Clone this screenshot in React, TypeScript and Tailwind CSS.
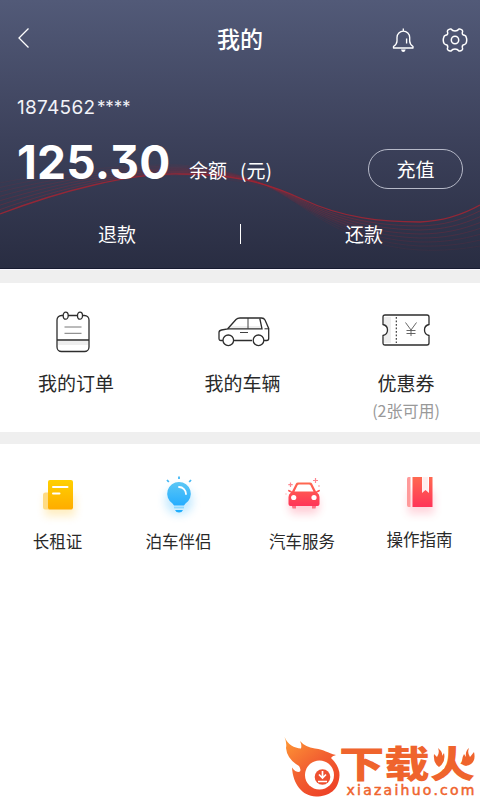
import React from "react";

const sans = "font-['Noto_Sans_CJK_SC',sans-serif]";

// Each strand runs from the left edge over the crest, through the crossing and down to the right edge.
const strands = [0, 1, 2, 3, 4, 5, 6, 7].map((i) => {
  const k = i / 7;
  const d = `M0 ${214 - 31 * k} C60 ${191 - 20 * k} 130 ${173 - 9 * k} 180 ${174 - 9 * k} C225 ${174 - 6 * k} 262 ${180 - 2 * k} 302 ${199 + 8 * k} C342 ${218 + 17 * k} 382 ${222 + 26 * k} 420 ${222 + 28 * k} C444 ${221 + 30 * k} 462 ${215 + 34 * k} 480 ${205 + 41 * k}`;
  return { d, opacity: i === 0 ? 0.85 : 0.42 - 0.3 * k };
});

function Waves() {
  return (
    <svg className="absolute inset-0" width="480" height="269" fill="none" stroke="#a52432">
      <path
        d="M90 184 Q180 156 245 177 Q280 186 312 205 Q350 220 382 222 L345 226 Q310 213 275 191 Q190 165 90 184Z"
        fill="#7e2b3c"
        fillOpacity="0.12"
        stroke="none"
      />
      {strands.map((s, i) => (
        <path key={i} d={s.d} strokeOpacity={s.opacity} strokeWidth={i === 0 ? 1.3 : 0.9} />
      ))}
    </svg>
  );
}

function OrderIcon() {
  return (
    <svg width="34" height="42" viewBox="0 0 34 42" fill="none" stroke="#2d2d2d" strokeWidth="1.3">
      <rect x="2" y="30" width="30" height="4" fill="#eee" stroke="none" />
      <path d="M7 4.5H5.500A4.500 4.500 0 0 0 1 9V36A4.500 4.500 0 0 0 5.500 40.500H28.500A4.500 4.500 0 0 0 33 36V9A4.500 4.500 0 0 0 28.500 4.500H27M12 4.500H21M1 29H33" />
      <ellipse cx="9.700" cy="4.700" rx="2.500" ry="3.500" />
      <ellipse cx="24" cy="4.700" rx="2.500" ry="3.500" />
      <path d="M8.500 16H25.500M8.500 22.300H25.500" stroke="#777" strokeWidth="1" />
    </svg>
  );
}

function CarIcon() {
  return (
    <svg width="52" height="30" viewBox="0 0 52 30" fill="none" stroke="#2d2d2d" strokeWidth="1.3">
      <path d="M14 9H42L43 11.500H11Z" fill="#eee" stroke="none" />
      <path d="M5 23.500H3Q1 23.500 1 21.500V15.500Q1 13.500 3.500 13L9.700 11.800L18 2.500Q19.500 1 22 1H43.500Q46 1 47 3L50.700 11.500V21.500Q50.700 23.500 48.700 23.500H46M16 23.500H34" />
      <path d="M9.700 11.800H44L41.800 1.500" />
      <path d="M30 1V11.500M22 15.500H30" strokeWidth=".9" />
      <path d="M46.500 11.800H50.500" strokeWidth="1" />
      <circle cx="10.300" cy="23.300" r="5.300" fill="#fff" />
      <circle cx="40.500" cy="23.300" r="5.300" fill="#fff" />
    </svg>
  );
}

function CouponIcon() {
  return (
    <svg width="48" height="32" viewBox="0 0 48 32" fill="none" stroke="#2d2d2d" strokeWidth="1.3">
      <path d="M2 3H9V29H2V22Q6 20 6 16T2 10Z" fill="#eee" stroke="none" />
      <path d="M3 1H45Q47 1 47 3V10.500Q42.500 11.500 42.500 16T47 21.500V29Q47 31 45 31H3Q1 31 1 29V21.500Q5.500 20.500 5.500 16T1 10.500V3Q1 1 3 1Z" />
      <path d="M14.300 3V29" strokeDasharray="1.800 1.700" strokeWidth="1.100" />
      <path d="M23.500 8.500L29 16L34.500 8.500M29 16V22M24.500 16.500H33.500M24.500 19.500H33.500" stroke="#555" strokeWidth=".9" />
    </svg>
  );
}

function PermitIcon() {
  return (
    <svg width="60" height="60" viewBox="0 0 60 60" className="overflow-visible">
      <defs>
        <linearGradient id="permit" x2="0" y2="1"><stop stopColor="#ffd000" /><stop offset="1" stopColor="#ffac00" /></linearGradient>
        <filter id="glow" x="-50%" y="-50%" width="200%" height="200%"><feGaussianBlur stdDeviation="4" /></filter>
      </defs>
      <rect x="17" y="25" width="30" height="21" fill="#ffc940" opacity=".32" filter="url(#glow)" />
      <rect x="15" y="22.500" width="8" height="17" rx="2.500" fill="#ffdb83" />
      <rect x="20" y="10" width="25" height="29.500" rx="2" fill="url(#permit)" />
      <path d="M25 17H39.500M25 23.500H31.500" stroke="#fff" strokeWidth="2" strokeLinecap="round" />
    </svg>
  );
}

function BulbIcon() {
  return (
    <svg width="60" height="60" viewBox="0 0 60 60" className="overflow-visible">
      <defs><linearGradient id="bulb" x2="0" y2="1"><stop stopColor="#5bc7f5" /><stop offset="1" stopColor="#26adff" /></linearGradient></defs>
      <circle cx="30" cy="31" r="14" fill="#31b5ff" opacity=".27" filter="url(#glow)" />
      <path d="M30 12A11.700 11.700 0 0 0 23.500 33.500L25 35.500H35L36.500 33.500A11.700 11.700 0 0 0 30 12Z" fill="url(#bulb)" />
      <path d="M30 17A7 7 0 0 1 37 24" fill="none" stroke="#fff" strokeWidth="1.800" strokeLinecap="round" />
      <path d="M25 37.500H35" stroke="#8ed8ff" strokeWidth="1.800" />
      <path d="M26 40H34Q33 42.500 30 42.500T26 40Z" fill="#21aefd" />
      <path d="M30 6.500V9M18 10L19.800 12M42 10L40.200 12" stroke="#43b8f5" strokeWidth="1.800" />
    </svg>
  );
}

function ServiceIcon() {
  return (
    <svg width="60" height="60" viewBox="0 0 60 60" className="ml-1 overflow-visible">
      <defs><linearGradient id="red" x2="0" y2="1"><stop stopColor="#ff6950" /><stop offset="1" stopColor="#ff3458" /></linearGradient></defs>
      <rect x="15" y="26" width="30" height="18" rx="6" fill="#ff3458" opacity=".23" filter="url(#glow)" />
      <path d="M17.500 34H22V38.500H18.500ZM38 34H42.500L41.500 38.500H38Z" fill="#ff7285" />
      <path d="M22 13.500Q22.500 12.500 24 12.500H36Q37.500 12.500 38 13.500L42 21.500Q46 18.500 46 20.500Q46 22 43 22.500Q45.500 24 45.500 27V34Q45.500 36 43.500 36H16.500Q14.500 36 14.500 34V27Q14.500 24 17 22.500Q14 22 14 20.500Q14 18.500 18 21.500Z" fill="url(#red)" />
      <path d="M23.500 15.500Q24 14.500 25 14.500H35Q36 14.500 36.500 15.500L39.500 21.500H20.500Z" fill="#fff" />
      <circle cx="19.700" cy="27.500" r="2.600" fill="#fff" /><circle cx="40" cy="27.500" r="2.600" fill="#fff" />
      <path d="M41.500 8V13M39 10.500H44M16.500 12.500V17M14.300 14.700H18.700" stroke="#ff8791" strokeWidth="1.200" />
      <circle cx="45" cy="16" r=".9" fill="#ffb2b2" /><circle cx="12" cy="24" r=".8" fill="#ffc0c0" />
    </svg>
  );
}

function GuideIcon() {
  return (
    <svg width="60" height="60" viewBox="0 0 60 60" className="overflow-visible">
      <rect x="18" y="24" width="26" height="23" fill="#ff3458" opacity=".2" filter="url(#glow)" />
      <path d="M18.500 10Q17 10 17 12V38Q17 40 18.500 40H20.500V10Z" fill="#ff9a9a" />
      <path d="M22.500 10H32V26L35.500 23L39 26V10H42.500V40H22.500Z" fill="url(#red)" />
      <path d="M32.500 10H38V23.500L35.200 21L32.500 23.500Z" fill="#ffeded" />
    </svg>
  );
}

function Watermark() {
  return (
    <svg width="210" height="70" viewBox="270 730 210 70">
      <defs>
        <linearGradient id="fire" x1="0" y1="0" x2=".7" y2="1"><stop stopColor="#ff9b35" /><stop offset=".55" stopColor="#f26031" /><stop offset="1" stopColor="#ee4327" /></linearGradient>
      </defs>
      <path d="M284.500 737C288 745 294 748 301 748.500Q302 745 300 741Q305 747 315 748.500C325 749.500 327 753 336 755Q332 756 331 758Q339.500 766 339.500 775C339 790 329 796.500 316 796.500C302 796 293 784 292 767.500Q295 772 299 772Q302 771 299 766Q287 759 286 748Q287 743 284.500 737Z" fill="url(#fire)" />
      <circle cx="319.500" cy="775" r="14.500" fill="#fff" />
      <circle cx="322.500" cy="777" r="7.800" fill="#ee5030" />
      <path d="M322.500 771V777M319 774.500L322.500 778L326 774.500M318 781.500H327" fill="none" stroke="#fff" strokeWidth="1.700" />
      <text transform="translate(339 778) scale(1 .83)" fontSize="45" fontWeight="900" fill="#ef642d" textLength="136" lengthAdjust="spacingAndGlyphs" className="font-['Noto_Sans_CJK_SC',sans-serif]">下载火</text>
      <path d="M431 747H446L448 754L444 769H431ZM477 747H464L462 754L464 764L477 768Z" fill="#fff" />
      <path d="M438 748Q443 752 442 756L444 753Q446 762 439 767Q433 763 434 754L437 757Q440 753 438 748ZM469 748Q467 753 470 757L474 752Q476 760 471 764Q467 767 463 765Q461 759 464 754L466 757Q465 751 469 748Z" fill="#ef642d" />
      <text x="346.500" y="795" fontSize="14" fill="#ef642d" stroke="#ef642d" strokeWidth=".5" textLength="128" lengthAdjust="spacing" className="font-['DejaVu_Sans',sans-serif]">xiazaihuo.com</text>
    </svg>
  );
}

const services = [
  { label: "长租证", icon: <PermitIcon />, box: "w-[115px]" },
  { label: "泊车伴侣", icon: <BulbIcon />, box: "w-[127px]" },
  { label: "汽车服务", icon: <ServiceIcon />, box: "w-[120px]" },
  { label: "操作指南", icon: <GuideIcon />, box: "w-[115px]" },
];

export default function App() {
  return (
    <main className={`flex h-[800px] w-[480px] flex-col overflow-hidden bg-white text-[#292929] ${sans}`}>
      <header className="relative h-[269px] shrink-0 border-b border-[#171b30] bg-linear-to-b from-[#525a78] via-[#3d425c] to-[#292d42] text-white">
        <Waves />
        <div className="relative flex h-[76px] items-center">
          <svg width="14" height="22" viewBox="0 0 14 22" className="ml-4" fill="none" stroke="#fff" strokeWidth="1.300"><path d="M12.500 1.500L3 11L12.500 20.500" /></svg>
          <h1 className="ml-[187px] w-[47px] pb-px text-[23px] leading-[30px] font-medium whitespace-nowrap">我的</h1>
          <svg width="22" height="24" viewBox="0 0 22 24" className="mt-1 ml-[128px] overflow-visible" fill="none" stroke="#fff" strokeWidth="1.350">
            <path d="M11.300 0.500V3M5 13V9.500A6.300 6.300 0 0 1 17.700 9.500V13Q17.700 16 21 18.500V20H1.500V18.500Q5 16 5 13Z" strokeLinejoin="round" />
            <path d="M14.600 10.500V15.500" /><path d="M9 21.500H13.700Q13 24 11.300 24T9 21.500Z" fill="#fff" stroke="none" />
          </svg>
          <svg width="26" height="26" viewBox="0 0 26 26" className="mt-[3px] ml-[28px]" fill="none" stroke="#fff" strokeWidth="1.500" strokeLinejoin="round">
            <path d="M9 2Q7.500 1.500 5.700 3.200Q5 4 5.700 5.800Q6 8 3.500 8.300Q2 8.600 1.500 11Q1 13 1.500 15Q2 17.300 3.500 17.600Q6 18 5.700 20.200Q5 22 5.700 22.800Q7.500 24.500 9 24Q10.500 22 13 22T17 24Q18.500 24.500 20.300 22.800Q21 22 20.300 20.200Q20 18 22.500 17.600Q24 17.300 24.500 15Q25 13 24.500 11Q24 8.600 22.500 8.300Q20 8 20.300 5.800Q21 4 20.300 3.200Q18.500 1.500 17 2Q15.500 4 13 4T9 2Z" />
            <circle cx="13" cy="13" r="3.700" />
          </svg>
        </div>
        <p className="relative mt-5 ml-[17px] flex h-6 font-['Inter',sans-serif] text-[19px] leading-6 text-[#f2f3f8]">
          <span className="w-[80px] tracking-[0.3px]">1874562</span><span className="-mt-px text-[17px] leading-6 tracking-[-0.2px]">****</span>
        </p>
        <div className="relative flex h-[80px] items-start">
          <strong className="mt-[18px] ml-[17px] w-[172px] font-['Inter',sans-serif] text-[46px] leading-[48px] font-bold tracking-[0.2px] [font-feature-settings:'cv09']">125.30</strong>
          <span className="mt-[36px] w-[51px] text-[19px] leading-[28px] whitespace-nowrap">余额</span>
          <span className="mt-[36px] w-[128px] text-[19px] leading-[28px] whitespace-nowrap">(元)</span>
          <button className="mt-[29px] h-[40px] w-[95px] rounded-full border border-[#b6b9c8] text-[19px] leading-[38px]">充值</button>
        </div>
        <div className="relative mt-5 flex h-[28px] items-center text-[19px] leading-[28px]">
          <span className="ml-[98px] w-[142px]">退款</span>
          <i className="h-5 w-px bg-white" />
          <span className="ml-[104px]">还款</span>
        </div>
      </header>
      <div className="h-[14px] shrink-0 border-t border-[#faf8ff] bg-[#efefef]" />
      <section className="flex h-[149px] shrink-0 text-[19px] leading-[28px]">
        <div className="flex w-[152px] flex-col items-center"><div className="flex h-[86px] items-center pt-[11px] pr-[6px]"><OrderIcon /></div><span>我的订单</span></div>
        <div className="flex w-[181px] flex-col items-center"><div className="flex h-[86px] items-center pt-[12px] pl-[2px]"><CarIcon /></div><span>我的车辆</span></div>
        <div className="flex w-[146px] flex-col items-center"><div className="flex h-[86px] items-center pt-[8px]"><CouponIcon /></div><span>优惠券</span><span className="text-[16px] leading-[27px] text-[#999]">(2张可用)</span></div>
      </section>
      <div className="h-3 shrink-0 bg-[#efefef]" />
      <section className="flex h-[286px] shrink-0">
        {services.map((s, i) => (
          <div key={s.label} className={`flex shrink-0 flex-col items-center ${s.box}`}>
            <div className={i === 3 ? "mt-[23px] h-[60px]" : "mt-[26px] h-[59px]"}>{s.icon}</div>
            <span className="text-[16.500px] leading-[24px] whitespace-nowrap">{s.label}</span>
          </div>
        ))}
      </section>
      <div className="flex justify-end"><Watermark /></div>
    </main>
  );
}
